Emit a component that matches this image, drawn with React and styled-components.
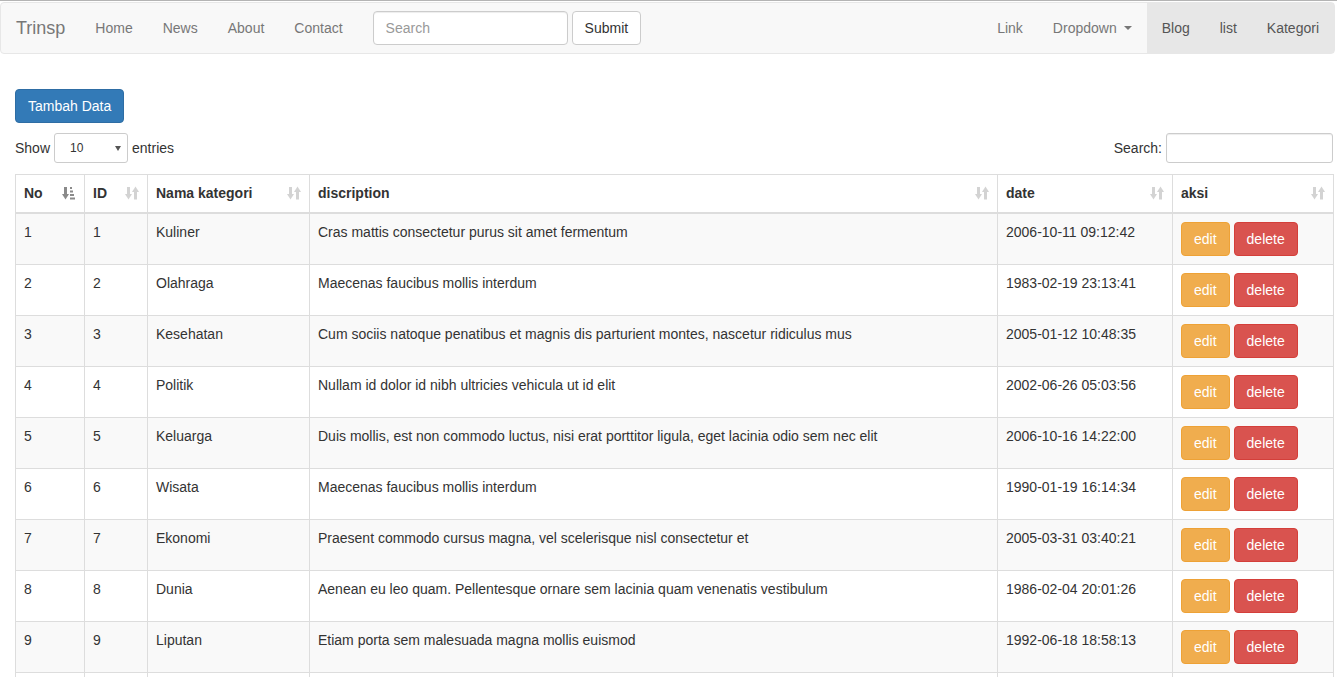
import React from "react";
import styled, { createGlobalStyle } from "styled-components";

const GlobalStyle = createGlobalStyle`
  html {
    overflow: hidden;
  }
  body {
    margin: 0;
    padding-top: 1px;
    border-top: 1px solid #b4b4b4;
    font-family: "Liberation Sans", Arial, Helvetica, sans-serif;
    font-size: 14px;
    line-height: 20px;
    color: #333;
    background: #fff;
  }
  * {
    box-sizing: border-box;
  }
`

const Navbar = styled.nav`
    display: flex;
    justify-content: space-between;
    align-items: stretch;
    height: 52px;
    margin-right: 2px;
    background-color: #f8f8f8;
    border: 1px solid #e7e7e7;
    border-radius: 4px;
`

const NavGroup = styled.div`
    display: flex;
    align-items: stretch;
`

const Brand = styled.a`
    padding: 15px;
    font-size: 18px;
    line-height: 20px;
    color: #777;
    text-decoration: none;
`

const NavLink = styled.a`
    display: flex;
    align-items: center;
    gap: 7px;
    padding: 0 15px;
    color: ${props => (props.active ? "#555" : "#777")};
    background-color: ${props => (props.active ? "#e7e7e7" : "transparent")};
    text-decoration: none;
`

const Caret = styled.span`
    display: inline-block;
    width: 0;
    height: 0;
    border-top: 4px solid #777;
    border-left: 4px solid transparent;
    border-right: 4px solid transparent;
`

const NavForm = styled.form`
    display: flex;
    align-items: center;
    gap: 4px;
    padding: 0 15px;
`

const TextInput = styled.input`
    height: ${props => (props.small ? "30px" : "34px")};
    width: ${props => props.width || "195px"};
    padding: 6px 12px;
    font-family: inherit;
    font-size: 14px;
    color: #555;
    background: #fff;
    border: 1px solid #ccc;
    border-radius: ${props => (props.small ? "3px" : "4px")};
    box-shadow: inset 0 1px 1px rgba(0, 0, 0, 0.075);
    outline: none;
    &::placeholder {
        color: #999;
    }
`

const Button = styled.button`
    display: inline-block;
    height: 34px;
    padding: 6px 12px;
    font-family: inherit;
    font-size: 14px;
    line-height: 20px;
    border-radius: 4px;
    border: 1px solid ${props => props.border || "#ccc"};
    background-color: ${props => props.bg || "#fff"};
    color: ${props => (props.bg ? "#fff" : "#333")};
    cursor: pointer;
`

const Content = styled.main`
    padding: 35px 4px 0 15px;
`

const Controls = styled.div`
    display: flex;
    justify-content: space-between;
    align-items: center;
    margin-top: 10px;
`

const ControlLabel = styled.label`
    display: flex;
    align-items: center;
    gap: 4px;
`

const SelectWrap = styled.span`
    position: relative;
    display: inline-block;
`

const Select = styled.select`
    appearance: none;
    width: 74px;
    height: 30px;
    padding: 5px 10px 5px 15px;
    font-family: inherit;
    font-size: 12px;
    color: #333;
    background: #fff;
    border: 1px solid #ccc;
    border-radius: 3px;
`

const SelectArrow = styled.span`
    position: absolute;
    right: 7px;
    top: 13px;
    width: 0;
    height: 0;
    border-top: 5px solid #555;
    border-left: 3.5px solid transparent;
    border-right: 3.5px solid transparent;
    pointer-events: none;
`

const Table = styled.table`
    width: 100%;
    margin-top: 11px;
    border-collapse: collapse;
    table-layout: fixed;
`

const Th = styled.th`
    width: ${props => props.w}px;
    padding: 8px 8px 9px;
    text-align: left;
    font-weight: bold;
    border: 1px solid #ddd;
    border-bottom: 2px solid #ddd;
`

const ThInner = styled.div`
    display: flex;
    justify-content: space-between;
    align-items: center;
`

const Tr = styled.tr`
    background-color: ${props => (props.striped ? "#f9f9f9" : "#fff")};
`

const Td = styled.td`
    padding: 8px;
    vertical-align: top;
    border: 1px solid #ddd;
    white-space: nowrap;
    overflow: hidden;
`

const Actions = styled.div`
    display: flex;
    gap: 4px;
`

const SortIcon = ({ active }) => (
    <svg width="14" height="14" viewBox="0 0 14 14" fill={active ? "#8a8a8a" : "#d3d3d3"}>
        <rect x="2" y="1" width="3" height="8" />
        <polygon points="0,8 7,8 3.5,13.5" />
        {active ? (
            <>
                <rect x="8" y="1" width="2" height="2" />
                <rect x="8" y="4.5" width="3" height="2" />
                <rect x="8" y="8" width="4" height="2" />
                <rect x="8" y="11.5" width="5" height="2" />
            </>
        ) : (
            <>
                <polygon points="7,6 14,6 10.5,0.5" />
                <rect x="9" y="5" width="3" height="8.5" />
            </>
        )}
    </svg>
)

const columns = [
    { label: "No", w: 69, active: true },
    { label: "ID", w: 63 },
    { label: "Nama kategori", w: 162 },
    { label: "discription", w: 688 },
    { label: "date", w: 175 },
    { label: "aksi", w: 161 },
]

const rows = [
    ["Kuliner", "Cras mattis consectetur purus sit amet fermentum", "2006-10-11 09:12:42"],
    ["Olahraga", "Maecenas faucibus mollis interdum", "1983-02-19 23:13:41"],
    ["Kesehatan", "Cum sociis natoque penatibus et magnis dis parturient montes, nascetur ridiculus mus", "2005-01-12 10:48:35"],
    ["Politik", "Nullam id dolor id nibh ultricies vehicula ut id elit", "2002-06-26 05:03:56"],
    ["Keluarga", "Duis mollis, est non commodo luctus, nisi erat porttitor ligula, eget lacinia odio sem nec elit", "2006-10-16 14:22:00"],
    ["Wisata", "Maecenas faucibus mollis interdum", "1990-01-19 16:14:34"],
    ["Ekonomi", "Praesent commodo cursus magna, vel scelerisque nisl consectetur et", "2005-03-31 03:40:21"],
    ["Dunia", "Aenean eu leo quam. Pellentesque ornare sem lacinia quam venenatis vestibulum", "1986-02-04 20:01:26"],
    ["Liputan", "Etiam porta sem malesuada magna mollis euismod", "1992-06-18 18:58:13"],
    ["Teknologi", "Donec ullamcorper nulla non metus auctor fringilla", "1998-07-22 11:35:09"],
]

const App = () => {
    return (
        <>
            <GlobalStyle />
            <Navbar>
                <NavGroup>
                    <Brand href="#">Trinsp</Brand>
                    <NavLink href="#">Home</NavLink>
                    <NavLink href="#">News</NavLink>
                    <NavLink href="#">About</NavLink>
                    <NavLink href="#">Contact</NavLink>
                    <NavForm onSubmit={e => e.preventDefault()}>
                        <TextInput placeholder="Search" />
                        <Button type="submit">Submit</Button>
                    </NavForm>
                </NavGroup>
                <NavGroup>
                    <NavLink href="#">Link</NavLink>
                    <NavLink href="#">Dropdown <Caret /></NavLink>
                    <NavLink href="#" active>Blog</NavLink>
                    <NavLink href="#" active>list</NavLink>
                    <NavLink href="#" active>Kategori</NavLink>
                </NavGroup>
            </Navbar>

            <Content>
                <Button bg="#337ab7" border="#2e6da4">Tambah Data</Button>

                <Controls>
                    <ControlLabel>
                        Show
                        <SelectWrap>
                            <Select defaultValue="10">
                                <option>10</option>
                                <option>25</option>
                                <option>50</option>
                                <option>100</option>
                            </Select>
                            <SelectArrow />
                        </SelectWrap>
                        entries
                    </ControlLabel>
                    <ControlLabel>
                        Search:
                        <TextInput small width="167px" />
                    </ControlLabel>
                </Controls>

                <Table>
                    <thead>
                        <tr>
                            {columns.map(col => (
                                <Th key={col.label} w={col.w}>
                                    <ThInner>
                                        {col.label}
                                        <SortIcon active={col.active} />
                                    </ThInner>
                                </Th>
                            ))}
                        </tr>
                    </thead>
                    <tbody>
                        {rows.map((row, i) => (
                            <Tr key={i} striped={i % 2 === 0}>
                                <Td>{i + 1}</Td>
                                <Td>{i + 1}</Td>
                                <Td>{row[0]}</Td>
                                <Td>{row[1]}</Td>
                                <Td>{row[2]}</Td>
                                <Td>
                                    <Actions>
                                        <Button bg="#f0ad4e" border="#eea236">edit</Button>
                                        <Button bg="#d9534f" border="#d43f3a">delete</Button>
                                    </Actions>
                                </Td>
                            </Tr>
                        ))}
                    </tbody>
                </Table>
            </Content>
        </>
    );
};

export default App;
